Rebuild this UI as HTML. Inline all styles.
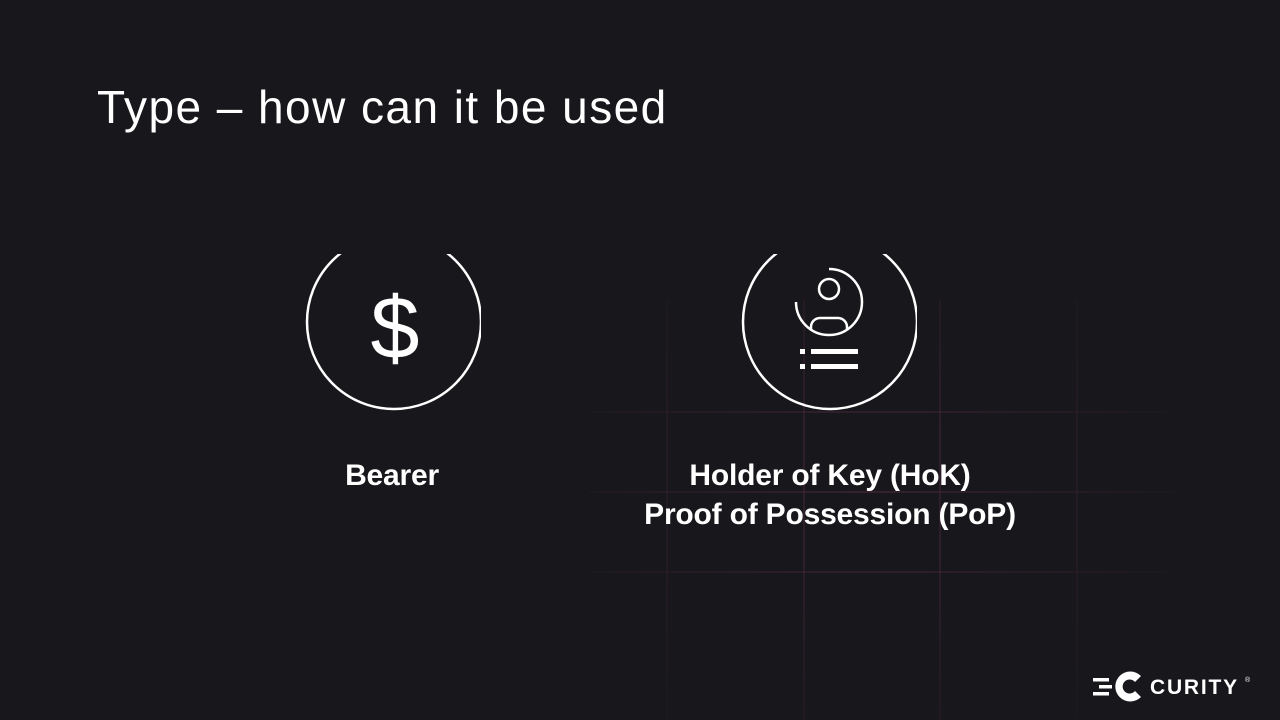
<!DOCTYPE html>
<html><head><style>
body{margin:0;width:1280px;height:720px;background:#18181c;overflow:hidden;position:relative;font-family:"Liberation Sans",sans-serif;color:#fff}
.t{position:absolute;left:97px;top:80px;font-size:46px;font-weight:300;letter-spacing:1.45px}
.l{position:absolute;font-weight:bold;font-size:30px;text-align:center;line-height:39px;letter-spacing:-0.2px}
</style></head><body>
<svg width="1280" height="720" style="position:absolute;left:0;top:0">
<defs>
<radialGradient id="g" cx="870" cy="492" r="330" gradientUnits="userSpaceOnUse">
<stop offset="0" stop-color="#5a2a45" stop-opacity="0.9"/><stop offset="1" stop-color="#5a2a45" stop-opacity="0"/></radialGradient>
<clipPath id="c1"><rect x="290" y="254" width="191" height="170"/></clipPath>
<clipPath id="c2"><rect x="730" y="254" width="187" height="170"/></clipPath>
<clipPath id="c3"><circle cx="829" cy="302" r="33"/></clipPath>
</defs>
<g stroke="url(#g)" stroke-width="1">
<line x1="667" y1="300" x2="667" y2="720"/><line x1="804" y1="300" x2="804" y2="720"/>
<line x1="940" y1="300" x2="940" y2="720"/><line x1="1077" y1="300" x2="1077" y2="720"/>
<line x1="590" y1="412" x2="1190" y2="412"/><line x1="590" y1="492" x2="1190" y2="492"/>
<line x1="590" y1="572" x2="1190" y2="572"/>
</g>
<circle cx="394" cy="322" r="87" fill="none" stroke="#fff" stroke-width="2.5" clip-path="url(#c1)"/>
<text x="395" y="358" font-size="88" fill="#fff" text-anchor="middle" font-family="Liberation Sans">$</text>
<circle cx="830" cy="322" r="87" fill="none" stroke="#fff" stroke-width="2.5" clip-path="url(#c2)"/>
<g fill="none" stroke="#fff" stroke-width="2.5">
<path d="M796 302 A33 33 0 1 0 829 269"/>
<circle cx="829" cy="289" r="10"/>
<path clip-path="url(#c3)" d="M811 345 v-18 a9 9 0 0 1 9 -9 h18 a9 9 0 0 1 9 9 v18"/>
</g>
<g fill="#fff">
<rect x="800" y="349" width="5" height="5"/><rect x="800" y="364" width="5" height="5"/>
<rect x="811" y="349" width="47" height="5"/><rect x="811" y="364" width="47" height="5"/>
</g>
<g fill="#fff">
<rect x="1093" y="678" width="16" height="3.5"/><rect x="1099" y="685" width="13" height="3.5"/><rect x="1093" y="692" width="16" height="3.5"/>
<path d="M1141 676 A15 15 0 1 0 1141 697 L1135 691 A7 7 0 1 1 1135 682 Z"/>
</g>
<text x="1150" y="694" font-size="21" font-weight="bold" fill="#fff" letter-spacing="1.8">CURITY</text>
<text x="1245" y="682" font-size="7" fill="#fff">®</text>
</svg>
<div class="t">Type – how can it be used</div>
<div class="l" style="left:292px;width:200px;top:456px">Bearer</div>
<div class="l" style="left:580px;width:500px;top:456px">Holder of Key (HoK)<br>Proof of Possession (PoP)</div>
</body></html>
